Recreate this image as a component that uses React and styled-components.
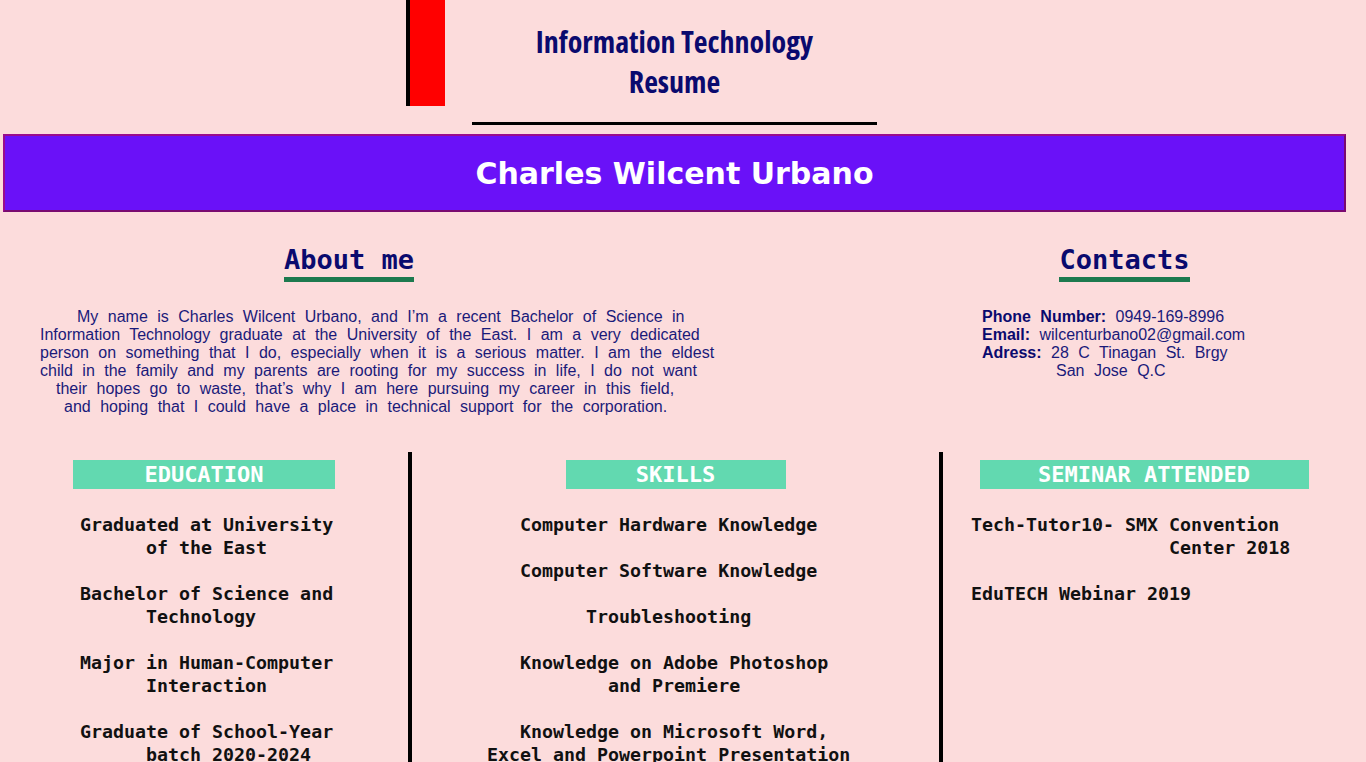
import React from 'react';
import styled, { createGlobalStyle } from 'styled-components';

const GlobalStyle = createGlobalStyle`
  html, body {
    margin: 0;
    padding: 0;
    background-color: #fcdcdc;
  }
  body {
    font-family: "Liberation Sans", Arial, sans-serif;
  }
`;

const Page = styled.div`
  width: 1349px;
`;

const Header = styled.header`
  display: grid;
  grid-template-columns: 1fr 405px 1fr;
  align-items: start;
`;

const RedBar = styled.div`
  justify-self: end;
  margin-right: 27px;
  width: 35px;
  height: 106px;
  background-color: #ff0000;
  border-left: 4px solid #000;
`;

const Title = styled.h1`
  margin: 0;
  padding: 22px 0 20px;
  text-align: center;
  font-family: "Open Sans", "Liberation Sans Narrow", sans-serif;
  font-stretch: 75%;
  font-weight: 700;
  font-size: 30px;
  line-height: 40px;
  color: #0a0a6e;
  border-bottom: 3px solid #000;
`;

const Banner = styled.div`
  margin: 9px 3px 0;
  height: 74px;
  display: flex;
  align-items: center;
  justify-content: center;
  background-color: #6a11f8;
  border: 2px solid #9a0d8c;
  border-bottom-color: #7a0a70;
  border-right-color: #7a0a70;
`;

const Name = styled.h2`
  margin: 0;
  font-family: "DejaVu Sans", Verdana, sans-serif;
  font-weight: 700;
  font-size: 30px;
  color: #fff;
`;

const AboutRow = styled.section`
  display: flex;
  justify-content: space-between;
  padding-top: 31px;
`;

const AboutCol = styled.div`
  width: 752px;
`;

const ContactCol = styled.div`
  width: 449px;
`;

const HeadingWrap = styled.div`
  text-align: center;
  padding-right: ${p => p.$shift || 0}px;
`;

const Heading = styled.h2`
  display: inline-block;
  margin: 0;
  font-family: "DejaVu Sans Mono", "Liberation Mono", monospace;
  font-weight: 700;
  font-size: 27px;
  line-height: 34px;
  color: #0a0a6e;
  border-bottom: 5px solid #1d7a4f;
`;

const AboutText = styled.div`
  margin-top: 26px;
  padding-left: 40px;
  font-size: 16px;
  line-height: 18px;
  word-spacing: 5px;
  white-space: nowrap;
  color: #1a1a7a;
`;

const AboutLine = styled.div`
  padding-left: ${p => p.$indent || 0}px;
`;

const ContactList = styled.div`
  margin-top: 26px;
  padding-left: 82px;
  font-size: 16px;
  line-height: 18px;
  word-spacing: 5px;
  color: #1a1a7a;
`;

const ContactLine = styled.div`
  padding-left: ${p => p.$indent || 0}px;
`;

const Label = styled.b`
  color: #0a0a6e;
`;

const Columns = styled.section`
  display: grid;
  grid-template-columns: 408px 531px 406px;
  margin-top: 36px;
`;

const Column = styled.div`
  padding: 8px 0 420px;
  border-left: ${p => (p.$divider ? '4px solid #000' : 'none')};
`;

const BoxTitle = styled.h3`
  margin: 0 auto;
  width: ${p => p.$width}px;
  height: 29px;
  background-color: #62d9b0;
  text-align: center;
  font-family: "DejaVu Sans Mono", "Liberation Mono", monospace;
  font-weight: 700;
  font-size: 22px;
  line-height: 29px;
  color: #fff;
`;

const ItemList = styled.div`
  padding-left: ${p => p.$left}px;
  padding-top: 1px;
`;

const Item = styled.pre`
  margin: 23px 0;
  font-family: "DejaVu Sans Mono", "Liberation Mono", monospace;
  font-weight: 700;
  font-size: 18.3px;
  line-height: 23px;
  color: #111;
`;

const aboutLines = [
  { text: 'My name is Charles Wilcent Urbano, and I’m a recent Bachelor of Science in', indent: 37 },
  { text: 'Information Technology graduate at the University of the East. I am a very dedicated' },
  { text: 'person on something that I do, especially when it is a serious matter. I am the eldest' },
  { text: 'child in the family and my parents are rooting for my success in life, I do not want' },
  { text: 'their hopes go to waste, that’s why I am here pursuing my career in this field,', indent: 16 },
  { text: 'and hoping that I could have a place in technical support for the corporation.', indent: 24 },
];

const education = [
  'Graduated at University\n      of the East',
  'Bachelor of Science and\n      Technology',
  'Major in Human-Computer\n      Interaction',
  'Graduate of School-Year\n      batch 2020-2024',
];

const skills = [
  '   Computer Hardware Knowledge',
  '   Computer Software Knowledge',
  '         Troubleshooting',
  '   Knowledge on Adobe Photoshop\n           and Premiere',
  '   Knowledge on Microsoft Word,\nExcel and Powerpoint Presentation',
];

const seminars = [
  'Tech-Tutor10- SMX Convention\n                  Center 2018',
  'EduTECH Webinar 2019',
];

export default function App() {
  return (
    <Page>
      <GlobalStyle />
      <Header>
        <RedBar />
        <Title>
          Information Technology
          <br />
          Resume
        </Title>
      </Header>

      <Banner>
        <Name>Charles Wilcent Urbano</Name>
      </Banner>

      <AboutRow>
        <AboutCol>
          <HeadingWrap $shift={54}>
            <Heading>About me</Heading>
          </HeadingWrap>
          <AboutText>
            {aboutLines.map(l => (
              <AboutLine key={l.text} $indent={l.indent}>
                {l.text}
              </AboutLine>
            ))}
          </AboutText>
        </AboutCol>
        <ContactCol>
          <HeadingWrap>
            <Heading>Contacts</Heading>
          </HeadingWrap>
          <ContactList>
            <ContactLine>
              <Label>Phone Number:</Label> 0949-169-8996
            </ContactLine>
            <ContactLine>
              <Label>Email:</Label> wilcenturbano02@gmail.com
            </ContactLine>
            <ContactLine>
              <Label>Adress:</Label> 28 C Tinagan St. Brgy
            </ContactLine>
            <ContactLine $indent={74}>San Jose Q.C</ContactLine>
          </ContactList>
        </ContactCol>
      </AboutRow>

      <Columns>
        <Column>
          <BoxTitle $width={262}>EDUCATION</BoxTitle>
          <ItemList $left={80}>
            {education.map(t => (
              <Item key={t}>{t}</Item>
            ))}
          </ItemList>
        </Column>
        <Column $divider>
          <BoxTitle $width={220}>SKILLS</BoxTitle>
          <ItemList $left={75}>
            {skills.map(t => (
              <Item key={t}>{t}</Item>
            ))}
          </ItemList>
        </Column>
        <Column $divider>
          <BoxTitle $width={329}>SEMINAR ATTENDED</BoxTitle>
          <ItemList $left={28}>
            {seminars.map(t => (
              <Item key={t}>{t}</Item>
            ))}
          </ItemList>
        </Column>
      </Columns>
    </Page>
  );
}
